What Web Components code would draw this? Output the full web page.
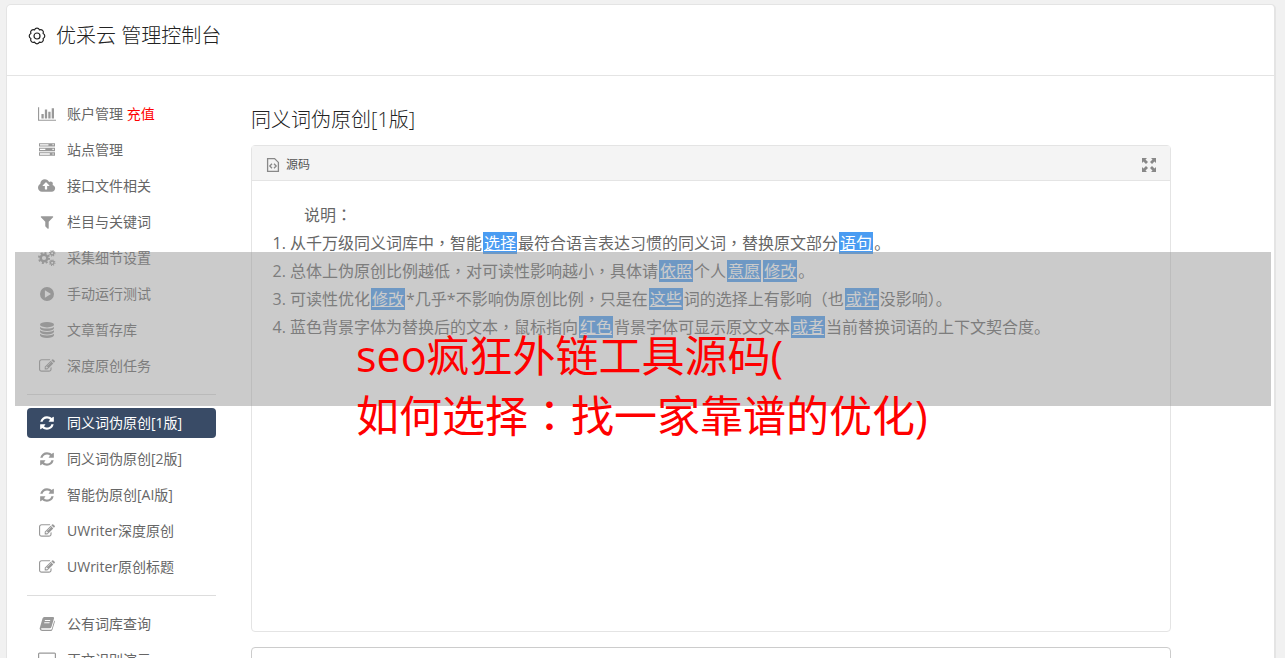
<!DOCTYPE html>
<html lang="zh-CN">
<head>
<meta charset="utf-8">
<title>优采云 管理控制台</title>
<style>
  html { scrollbar-width: none; background: #f1f1f1; }
  body { margin: 0; font: 14px/30px "Open Sans", "Noto Sans CJK SC", sans-serif; color: #666; }
  .mark { font-family: "Noto Sans CJK TC", sans-serif; line-height: 1; }
</style>
</head>
<body>
<console-page>
  <console-header slot="header">优采云 管理控制台</console-header>
  <side-nav slot="nav">
    <nav-item icon="chart">账户管理 <span slot="extra">充值</span></nav-item>
    <nav-item icon="server">站点管理</nav-item>
    <nav-item icon="cloud">接口文件相关</nav-item>
    <nav-item icon="filter">栏目与关键词</nav-item>
    <nav-item icon="cogs">采集细节设置</nav-item>
    <nav-item icon="play">手动运行测试</nav-item>
    <nav-item icon="database">文章暂存库</nav-item>
    <nav-item icon="edit">深度原创任务</nav-item>
    <nav-divider></nav-divider>
    <nav-item icon="refresh" active>同义词伪原创[1版]</nav-item>
    <nav-item icon="refresh">同义词伪原创[2版]</nav-item>
    <nav-item icon="refresh">智能伪原创[AI版]</nav-item>
    <nav-item icon="edit">UWriter深度原创</nav-item>
    <nav-item icon="edit">UWriter原创标题</nav-item>
    <nav-divider></nav-divider>
    <nav-item icon="book">公有词库查询</nav-item>
    <nav-item icon="desktop">正文识别演示</nav-item>
  </side-nav>
  <rewrite-editor>同义词伪原创[1版]</rewrite-editor>
</console-page>
<promo-banner>
  <span>seo疯狂外链工具源码(</span>
  <span>如何选择<span class="mark" lang="zh-TW">：</span>找一家靠谱的优化)</span>
</promo-banner>

<script>
const ICONS = {
  chart: ['0 0 2048 1792', '<path d="M640 896v512h-256v-512h256zm384-512v1024h-256v-1024h256zm1024 1152v128h-2048v-1536h128v1408h1920zm-640-896v768h-256v-768h256zm384-384v1152h-256v-1152h256z"/>'],
  server: ['0 0 1792 1792', '<path fill-rule="evenodd" d="M0 128h1792v384H0zM110 240v150h950V240zM1500 250v120h160V250zM0 640h1792v384H0zM110 752v150h600V752zM1500 762v120h160V762zM0 1152h1792v384H0zM110 1264v150h1100v-150zM1500 1274v120h160v-120z"/>'],
  cloud: ['0 0 1920 1792', '<path d="M1280 864q0-14-9-23l-352-352q-9-9-23-9t-23 9l-351 351q-10 12-10 24 0 14 9 23t23 9h224v352q0 13 9.5 22.5t22.5 9.5h192q13 0 22.5-9.5t9.5-22.5v-352h224q13 0 22.5-9.5t9.5-22.5zm640 288q0 159-112.5 271.5t-271.5 112.5h-1088q-185 0-316.5-131.5t-131.5-316.5q0-130 70-240t188-165q-2-30-2-43 0-212 150-362t362-150q156 0 285.5 87t188.5 231q71-62 166-62 106 0 181 75t75 181q0 76-41 138 130 31 213.5 135.5t83.5 238.5z"/>'],
  filter: ['0 0 1792 1792', '<path d="M1595 295q17 41-14 70l-493 493v742q0 42-39 59-13 5-25 5-27 0-45-19l-256-256q-19-19-19-45v-486l-493-493q-31-29-14-70 17-39 59-39h1280q42 0 59 39z"/>'],
  cogs: ['0 0 18 16', '<g fill="none" stroke="currentColor"><circle cx="6" cy="8" r="3.3" stroke-width="2.4"/><circle cx="6" cy="8" r="5" stroke-width="2" stroke-dasharray="1.96 1.96"/><circle cx="14.2" cy="3.3" r="1.7" stroke-width="1.3"/><circle cx="14.2" cy="3.3" r="2.7" stroke-width="1.1" stroke-dasharray="1.06 1.06"/><circle cx="14.2" cy="12.7" r="1.7" stroke-width="1.3"/><circle cx="14.2" cy="12.7" r="2.7" stroke-width="1.1" stroke-dasharray="1.06 1.06"/></g>'],
  play: ['0 0 16 16', '<path fill-rule="evenodd" d="M8 1a7 7 0 1 1 0 14A7 7 0 0 1 8 1zM5.9 4.3v7.4L12 8z"/>'],
  database: ['0 0 16 16', '<ellipse cx="8" cy="2.7" rx="7" ry="2.7"/><path d="M1 4.9q2 1.7 7 1.7t7-1.7v1.4Q14 9 8 9T1 6.3zM1 8.3q2 1.7 7 1.7t7-1.7v1.4q-1 2.7-7 2.7t-7-2.7zM1 11.7q2 1.7 7 1.7t7-1.7V13.3Q14 16 8 16T1 13.3z"/>'],
  edit: ['0 0 1792 1792', '<path d="M888 1184l116-116-152-152-116 116v56h96v96h56zm440-720q-16-16-33 1l-350 350q-17 17-1 33t33-1l350-350q17-17 1-33zm80 594v190q0 119-84.5 203.5t-203.5 84.5h-832q-119 0-203.5-84.5t-84.5-203.5v-832q0-119 84.5-203.5t203.5-84.5h832q63 0 117 25 15 7 18 23 3 17-9 29l-49 49q-14 14-32 8-23-6-45-6h-832q-66 0-113 47t-47 113v832q0 66 47 113t113 47h832q66 0 113-47t47-113v-126q0-13 9-22l64-64q15-15 35-7t20 29zm-96-738l288 288-672 672h-288v-288zm444 132l-92 92-288-288 92-92q28-28 68-28t68 28l152 152q28 28 28 68t-28 68z"/>'],
  refresh: ['0 0 1792 1792', '<path d="M1639 1056q0 5-1 7-64 268-268 434.5t-478 166.5q-146 0-282.5-55t-243.5-157l-129 129q-19 19-45 19t-45-19-19-45v-448q0-26 19-45t45-19h448q26 0 45 19t19 45-19 45l-137 137q71 66 161 102t187 36q134 0 250-65t186-179q11-17 53-117 8-23 30-23h192q13 0 22.5 9.5t9.5 22.5zm25-800v448q0 26-19 45t-45 19h-448q-26 0-45-19t-19-45 19-45l138-138q-148-137-349-137-134 0-250 65t-186 179q-11 17-53 117-8 23-30 23h-199q-13 0-22.5-9.5t-9.5-22.5v-7q65-268 270-434.5t480-166.5q146 0 284 55.5t245 156.5l130-129q19-19 45-19t45 19 19 45z"/>'],
  book: ['0 0 16 16', '<path fill-rule="evenodd" d="M5.2 1H14q1.3.2 1 1.5L12.4 11q-.4 1.2-1.6 1.2H2.7q-.9.1-.6.9.2.7 1.2.7h8.6q.7 0 .9-.7l2.5-8.5q.8.5.5 1.5L13.4 13.7Q13 15 11.7 15H3Q.7 14.7.6 12.5L3.5 2.5Q4 1.1 5.2 1zM6 4l-.3 1H11l.3-1zM5.4 6.2l-.3 1h5.3l.3-1z"/>'],
  desktop: ['0 0 18 16', '<path fill-rule="evenodd" d="M1.5.5h15q1.5 0 1.5 1.5v9q0 1.5-1.5 1.5H11.5l1 2.5h-7l1-2.5h-5Q0 12.5 0 11V2Q0 .5 1.5.5zM1.2 1.7v8.3h15.6V1.7z"/>'],
  gear: ['0 0 18 18', '<g fill="none" stroke="currentColor" stroke-width="1.2"><circle cx="9" cy="9" r="3"/><path stroke-linejoin="round" d="M6.5 2.9A2.7 2.7 0 0 1 11.5 2.9A2.7 2.7 0 0 1 15.1 6.5A2.7 2.7 0 0 1 15.1 11.5A2.7 2.7 0 0 1 11.5 15.1A2.7 2.7 0 0 1 6.5 15.1A2.7 2.7 0 0 1 2.9 11.5A2.7 2.7 0 0 1 2.9 6.5A2.7 2.7 0 0 1 6.5 2.9z"/></g>'],
  source: ['0 0 16 16', '<path fill="none" stroke="currentColor" stroke-width="1.3" d="M2.6 1.6h7l3.8 3.8v9H2.6zM7 6.7L4.8 9 7 11.3M9 6.7L11.2 9 9 11.3"/>'],
  expand: ['0 0 14 14', '<path d="M0 0h5L3.5 1.5 6 4 4 6 1.5 3.5 0 5zM14 0v5l-1.5-1.5L10 6 8 4l2.5-2.5L9 0zM0 14V9l1.5 1.5L4 8l2 2-2.5 2.5L5 14zM14 14H9l1.5-1.5L8 10l2-2 2.5 2.5L14 9z"/>']
};

// Commas and colons sit in the middle of their cell in the Traditional Chinese face.
const centreMarks = text => text.replace(/[，：]/g, '<span class="mark" lang="zh-TW">$&</span>');

class UiElement extends HTMLElement {
  connectedCallback() {
    if (!this.shadowRoot) this.attachShadow({ mode: 'open' }).innerHTML = this.render();
  }
}

customElements.define('ui-icon', class extends UiElement {
  render() {
    const [box, shape] = ICONS[this.getAttribute('name')];
    return `<style>
      :host { display: flex; justify-content: center; flex: none; width: 20px; }
      svg { display: block; height: var(--icon-size, 16px); fill: currentColor; }
    </style><svg viewBox="${box}" aria-hidden="true">${shape}</svg>`;
  }
});

customElements.define('console-page', class extends UiElement {
  render() {
    return `<style>
      :host { display: block; margin: 4px 9px 0 6px; background: #fff; border: 1px solid #e4e4e4; border-right-width: 2px; border-radius: 5px; }
      .columns { display: flex; gap: 35px; padding: 23px 103px 24px 20px; }
      main { flex: 1; min-width: 0; }
    </style>
    <slot name="header"></slot>
    <div class="columns"><slot name="nav"></slot><main><slot></slot></main></div>`;
  }
});

customElements.define('console-header', class extends UiElement {
  render() {
    return `<style>
      :host { display: block; padding: 16px 20px 24px; border-bottom: 1px solid #e4e4e4; color: #222; }
      header { display: flex; align-items: center; gap: 9px; --icon-size: 18px; }
      h1 { margin: 0; font-size: 20px; line-height: 30px; font-weight: 300; }
    </style>
    <header><ui-icon name="gear"></ui-icon><h1><slot></slot></h1></header>`;
  }
});

customElements.define('side-nav', class extends UiElement {
  render() {
    return `<style>
      :host { display: block; flex: none; width: 189px; }
      nav { display: flex; flex-direction: column; gap: 6px; }
    </style><nav><slot></slot></nav>`;
  }
});

customElements.define('nav-divider', class extends UiElement {
  render() {
    return `<style>
      :host { display: block; padding: 7px 0; }
      hr { margin: 0; border: 0; border-top: 1px solid #ddd; }
    </style><hr>`;
  }
});

customElements.define('nav-item', class extends UiElement {
  render() {
    return `<style>
      :host { display: block; }
      a { display: flex; align-items: center; gap: 10px; padding: 0 10px; border-radius: 4px; color: #666; text-decoration: none; white-space: pre; }
      ui-icon { color: #999; }
      ::slotted(span) { color: #f00; }
      :host([active]) a { background: #394b66; color: #fff; }
      :host([active]) ui-icon { color: #fff; }
    </style>
    <a href="#"><ui-icon name="${this.getAttribute('icon')}"></ui-icon><span><slot></slot><slot name="extra"></slot></span></a>`;
  }
});

customElements.define('synonym-mark', class extends UiElement {
  render() {
    return `<style>
      :host { display: inline; }
      a { margin: 0 1px; padding: 0 1px; background: #4a9cf2; color: #fff; text-decoration: underline; }
    </style><a href="#"><slot></slot></a>`;
  }
});

customElements.define('rewrite-editor', class extends UiElement {
  render() {
    return `<style>
      :host { display: block; }
      h2 { margin: 6px 0 10px; font-size: 20px; line-height: 30px; font-weight: 300; color: #222; }
      .panel { border: 1px solid #e4e4e4; border-radius: 4px; }
      .bar { display: flex; justify-content: space-between; align-items: center; padding: 4px 11px 0; background: #f4f4f4; border-bottom: 1px solid #e4e4e4; color: #888; }
      .label { display: flex; align-items: center; gap: 3px; font-size: 12px; line-height: 30px; }
      .label span { color: #555; }
      button { padding: 0; border: 0; background: none; color: #888; --icon-size: 14px; }
      .text { min-height: 410px; padding: 20px; font-size: 16px; line-height: 28px; }
      .mark { font-family: "Noto Sans CJK TC", sans-serif; line-height: 1; }
      p { margin: 0; text-indent: 2em; }
      ol { margin: 0; padding-left: 18px; }
      textarea { display: block; box-sizing: border-box; width: 100%; height: 120px; margin-top: 15px; border: 1px solid #ccc; border-radius: 4px; resize: none; }
    </style>
    <h2><slot></slot></h2>
    <section class="panel">
      <div class="bar">
        <div class="label"><ui-icon name="source"></ui-icon><span>源码</span></div>
        <button type="button" aria-label="全屏"><ui-icon name="expand"></ui-icon></button>
      </div>
      <div class="text">${centreMarks(`
        <p>说明：</p>
        <ol>
          <li>从千万级同义词库中，智能<synonym-mark>选择</synonym-mark>最符合语言表达习惯的同义词，替换原文部分<synonym-mark>语句</synonym-mark>。</li>
          <li>总体上伪原创比例越低，对可读性影响越小，具体请<synonym-mark>依照</synonym-mark>个人<synonym-mark>意愿</synonym-mark><synonym-mark>修改</synonym-mark>。</li>
          <li>可读性优化<synonym-mark>修改</synonym-mark>*几乎*不影响伪原创比例，只是在<synonym-mark>这些</synonym-mark>词的选择上有影响（也<synonym-mark>或许</synonym-mark>没影响）。</li>
          <li>蓝色背景字体为替换后的文本，鼠标指向<synonym-mark>红色</synonym-mark>背景字体可显示原文文本<synonym-mark>或者</synonym-mark>当前替换词语的上下文契合度。</li>
        </ol>`)}
      </div>
    </section>
    <textarea aria-label="原文"></textarea>`;
  }
});

customElements.define('promo-banner', class extends UiElement {
  render() {
    return `<style>
      :host { display: block; position: absolute; top: 252px; left: 15px; right: 14px; box-sizing: border-box; height: 154px; padding: 74px 0 0 341px; background: rgba(148, 148, 148, .49); color: #f00; font-size: 43px; line-height: 60px; pointer-events: none; }
      ::slotted(span) { display: block; white-space: nowrap; }
    </style><slot></slot>`;
  }
});
</script>
</body>
</html>
